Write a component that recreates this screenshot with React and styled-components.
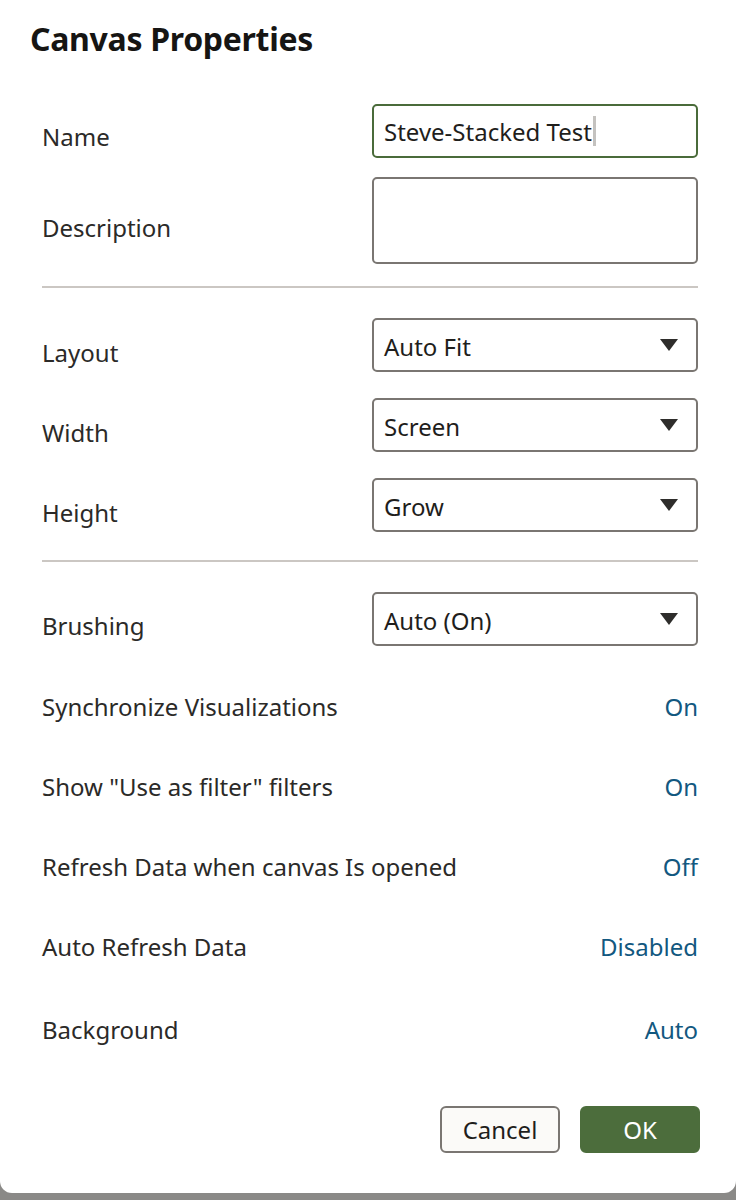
import React from 'react';
import styled, { createGlobalStyle } from 'styled-components';

const GlobalStyle = createGlobalStyle`
  html, body {
    margin: 0;
    padding: 0;
    background: #8a8987;
  }
  body {
    font-family: 'Noto Sans', 'Open Sans', sans-serif;
    color: #2a2a2a;
  }
`;

const Dialog = styled.div`
  background: #fff;
  height: 1193px;
  box-sizing: border-box;
  border-radius: 0 0 12px 12px;
  padding: 14px 38px 0 42px;
  display: flex;
  flex-direction: column;
`;

const Title = styled.h1`
  margin: 0 0 0 -12px;
  font-family: 'Noto Sans', sans-serif;
  font-weight: 700;
  font-size: 32px;
  letter-spacing: -0.3px;
  line-height: 50px;
  color: #161513;
`;

const Section = styled.div`
  display: flex;
  flex-direction: column;
  gap: ${p => p.gap ?? 26}px;
`;

const Row = styled.div`
  display: flex;
  justify-content: space-between;
  align-items: center;
  min-height: ${p => p.h || 54}px;
`;

const Label = styled.div`
  font-size: 24px;
  color: #2b2a28;
  white-space: nowrap;
  padding-top: ${p => p.offset ?? 10}px;
`;

const TextBox = styled.div`
  box-sizing: border-box;
  width: 326px;
  height: ${p => p.h || 54}px;
  border: ${p => (p.focused ? '2px solid #4a6b3a' : '2px solid #7a7672')};
  border-radius: 5px;
  padding: 0 10px;
  display: flex;
  align-items: ${p => (p.multi ? 'flex-start' : 'center')};
  font-size: 24px;
  color: #1f1e1c;
`;

const Caret = styled.span`
  display: inline-block;
  width: 3px;
  height: 30px;
  background: #c4c2bf;
  margin-left: 1px;
`;

const SelectBox = styled(TextBox)`
  justify-content: space-between;
  padding-right: 18px;
`;

const SelectText = styled.span`
  padding-top: 3px;
`;

const Arrow = styled.svg`
  width: 18px;
  height: 12px;
  fill: #2e2d2b;
`;

const Divider = styled.div`
  height: 2px;
  background: #cbc7c3;
  margin: ${p => p.m || '22px 0 30px'};
`;

const Value = styled.div`
  font-size: 24px;
  color: #12587f;
`;

const Footer = styled.div`
  margin: auto -2px 40px 0;
  display: flex;
  justify-content: flex-end;
  gap: 20px;
`;

const Button = styled.button`
  width: 120px;
  height: 47px;
  border-radius: 6px;
  font-family: 'Noto Sans', sans-serif;
  font-size: 24px;
  padding: 0;
  cursor: pointer;
  border: ${p => (p.primary ? '2px solid #4c6d3c' : '2px solid #7a7672')};
  background: ${p => (p.primary ? '#4c6d3c' : '#fbfaf8')};
  color: ${p => (p.primary ? '#fff' : '#1f1e1c')};
`;

const Select = ({ value }) => (
  <SelectBox>
    <SelectText>{value}</SelectText>
    <Arrow viewBox="0 0 18 12">
      <polygon points="0,0 18,0 9,12" />
    </Arrow>
  </SelectBox>
);

const toggles = [
  ['Synchronize Visualizations', 'On', 80],
  ['Show "Use as filter" filters', 'On', 80],
  ['Refresh Data when canvas Is opened', 'Off', 80],
  ['Auto Refresh Data', 'Disabled', 80],
  ['Background', 'Auto', 86],
];

export default function App() {
  return (
    <>
      <GlobalStyle />
      <Dialog>
        <Title>Canvas Properties</Title>
        <Section gap={19} style={{ marginTop: 40 }}>
          <Row>
            <Label>Name</Label>
            <TextBox focused>
              <span>Steve-Stacked Test</span>
              <Caret />
            </TextBox>
          </Row>
          <Row h={87}>
            <Label offset={14}>Description</Label>
            <TextBox h={87} multi />
          </Row>
        </Section>
        <Divider />
        <Section>
          <Row>
            <Label offset={14}>Layout</Label>
            <Select value="Auto Fit" />
          </Row>
          <Row>
            <Label offset={14}>Width</Label>
            <Select value="Screen" />
          </Row>
          <Row>
            <Label offset={14}>Height</Label>
            <Select value="Grow" />
          </Row>
        </Section>
        <Divider m="28px 0 30px" />
        <Row>
          <Label offset={12}>Brushing</Label>
          <Select value="Auto (On)" />
        </Row>
        <Section gap={0} style={{ marginTop: 20 }}>
          {toggles.map(([label, value, h]) => (
            <Row key={label} h={h}>
              <Label offset={0}>{label}</Label>
              <Value>{value}</Value>
            </Row>
          ))}
        </Section>
        <Footer>
          <Button>Cancel</Button>
          <Button primary>OK</Button>
        </Footer>
      </Dialog>
    </>
  );
}
